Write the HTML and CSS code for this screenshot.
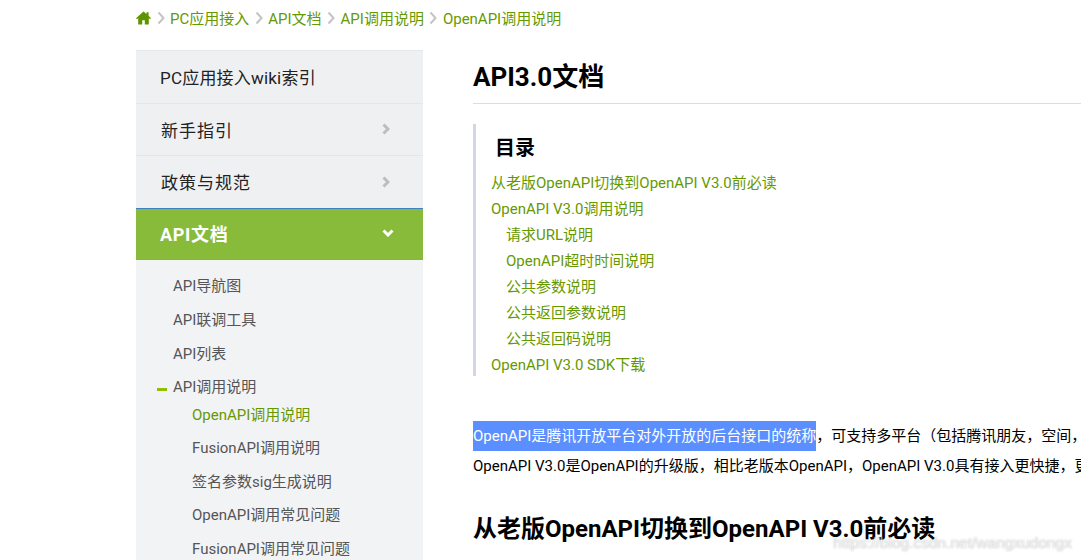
FILE: index.html
```html
<!DOCTYPE html>
<html lang="en">
<head>
  <meta charset="UTF-8" />
  <title>OpenAPI调用说明</title>
  <link rel="stylesheet" href="styles.css">
</head>
<body>
  <div class="crumbs">
    <svg class="home" width="15" height="14" viewBox="0 0 15 14"><path d="M7.5 0.5L0 7.2l0.9 1L2.2 7v6.5h4V9.2h2.6v4.3h4V7l1.3 1.2 0.9-1L12.6 4.8V1.2h-2v1.8z"/></svg>
    <svg class="sep" width="8" height="14" viewBox="0 0 8 14"><path d="M1.5 1.5L6.5 7l-5 5.5"/></svg>
    <a href="#">PC应用接入</a>
    <svg class="sep" width="8" height="14" viewBox="0 0 8 14"><path d="M1.5 1.5L6.5 7l-5 5.5"/></svg>
    <a href="#">API文档</a>
    <svg class="sep" width="8" height="14" viewBox="0 0 8 14"><path d="M1.5 1.5L6.5 7l-5 5.5"/></svg>
    <a href="#">API调用说明</a>
    <svg class="sep" width="8" height="14" viewBox="0 0 8 14"><path d="M1.5 1.5L6.5 7l-5 5.5"/></svg>
    <a href="#">OpenAPI调用说明</a>
  </div>

  <div class="page">
    <div class="sidebar">
      <div class="nav-item index">PC应用接入wiki索引</div>
      <div class="nav-item wide">新手指引
        <svg class="arrow" width="8" height="12" viewBox="0 0 8 12"><path d="M1.5 1.5L6 6l-4.500 4.500"/></svg>
      </div>
      <div class="nav-item wide">政策与规范
        <svg class="arrow" width="8" height="12" viewBox="0 0 8 12"><path d="M1.5 1.5L6 6l-4.500 4.500"/></svg>
      </div>
      <div class="nav-item active">API文档
        <svg class="arrow" width="12" height="8" viewBox="0 0 12 8"><path d="M1.500 1.500L6 6l4.500-4.500"/></svg>
      </div>
      <div class="sub-nav">
        <div class="sub-item">API导航图</div>
        <div class="sub-item">API联调工具</div>
        <div class="sub-item">API列表</div>
        <div class="sub-item open">API调用说明</div>
        <div class="leaf current">OpenAPI调用说明</div>
        <div class="leaf">FusionAPI调用说明</div>
        <div class="leaf">签名参数sig生成说明</div>
        <div class="leaf">OpenAPI调用常见问题</div>
        <div class="leaf">FusionAPI调用常见问题</div>
      </div>
    </div>

    <div class="content">
      <h1>API3.0文档</h1>
      <div class="toc">
        <h3>目录</h3>
        <a href="#">从老版OpenAPI切换到OpenAPI V3.0前必读</a>
        <a href="#">OpenAPI V3.0调用说明</a>
        <a class="indent" href="#">请求URL说明</a>
        <a class="indent" href="#">OpenAPI超时时间说明</a>
        <a class="indent" href="#">公共参数说明</a>
        <a class="indent" href="#">公共返回参数说明</a>
        <a class="indent" href="#">公共返回码说明</a>
        <a href="#">OpenAPI V3.0 SDK下载</a>
      </div>
      <p class="first"><span class="selected">OpenAPI是腾讯开放平台对外开放的后台接口的统称</span>，可支持多平台（包括腾讯朋友，空间，</p>
      <p>OpenAPI V3.0是OpenAPI的升级版，相比老版本OpenAPI，OpenAPI V3.0具有接入更快捷，更</p>
      <h2>从老版OpenAPI切换到OpenAPI V3.0前必读</h2>
    </div>
  </div>

  <div class="watermark">https://blog.csdn.net/wangxudongx</div>
</body>
</html>
```

FILE: styles.css
```css
html, body {
  height: 100%;
  overflow: hidden;
}
body {
  margin: 0;
  background-color: #fff;
  color: #000;
  font-family: Roboto, "Noto Sans CJK SC", sans-serif;
  font-size: 15px;
}
a {
  color: #669900;
  text-decoration: none;
}
.crumbs {
  display: flex;
  align-items: center;
  height: 37px;
  box-sizing: border-box;
  padding: 0 0 2px 136px;
  gap: 5.5px;
}
.home {
  fill: #5f9400;
}
.sep {
  fill: none;
  stroke: #c4c4c4;
  stroke-width: 2;
}
.page {
  display: flex;
  margin-left: 136px;
  padding-top: 13px;
}
.sidebar {
  width: 287px;
  flex-shrink: 0;
  height: 510px;
  background: #f2f3f5;
}
.nav-item {
  display: flex;
  align-items: center;
  justify-content: space-between;
  height: 52.5px;
  padding: 0 33px 0 25px;
  background: #eff0f2;
  border-top: 1px solid #e5e6e8;
  box-sizing: border-box;
  font-size: 17px;
  color: #222;
}
.nav-item.index {
  padding-left: 24px;
  letter-spacing: 0.2px;
}
.nav-item.wide {
  letter-spacing: 1px;
}
.arrow {
  fill: none;
  stroke: #bdbdbd;
  stroke-width: 3;
}
.nav-item.active {
  background: #88bb3a;
  border-top: 1px solid #3f7fc4;
  border-bottom: 1px solid #9a9a9a;
  color: #fff;
  font-size: 18px;
  font-weight: bold;
  letter-spacing: 0.7px;
  padding: 0 29px 2px 24px;
}
.active .arrow {
  stroke: #fff;
}
.sub-nav {
  padding-top: 8.6px;
  color: #555;
}
.sub-item {
  height: 34px;
  line-height: 34px;
  padding-left: 37px;
}
.sub-item.open {
  position: relative;
  height: 28px;
  line-height: 32px;
}
.sub-item.open::before {
  content: "";
  position: absolute;
  left: 21px;
  top: 17px;
  width: 10px;
  height: 3px;
  background: #8fbf00;
}
.leaf {
  height: 33.5px;
  line-height: 33.5px;
  padding-left: 56px;
}
.leaf.current {
  color: #669900;
}
.content {
  margin-left: 50px;
  flex: 1;
  min-width: 0;
}
h1 {
  margin: 0;
  height: 53px;
  line-height: 54px;
  font-size: 26px;
  border-bottom: 1px solid #ddd;
}
.toc {
  display: flex;
  flex-direction: column;
  margin-top: 20px;
  height: 252px;
  box-sizing: border-box;
  border-left: 3px solid #d3d7e5;
  padding-left: 15px;
}
.toc h3 {
  margin: 0;
  padding-left: 4px;
  height: 46px;
  line-height: 49px;
  font-size: 20px;
}
.toc a {
  height: 26px;
  line-height: 26px;
  white-space: nowrap;
}
.toc a.indent {
  padding-left: 15px;
}
p {
  margin: 0;
  height: 30px;
  line-height: 30px;
  white-space: nowrap;
}
p.first {
  margin-top: 45px;
}
.selected {
  display: inline-block;
  background: #5b8fff;
  color: #fff;
}
h2 {
  margin: 33px 0 0;
  font-size: 24px;
  line-height: 30px;
  white-space: nowrap;
}
.watermark {
  position: absolute;
  right: 9px;
  bottom: 8px;
  font-family: "Liberation Sans", sans-serif;
  font-size: 15.5px;
  color: rgba(255, 255, 255, 0.6);
  text-shadow: 0 0 2px rgba(120, 120, 120, 0.5);
}
```
